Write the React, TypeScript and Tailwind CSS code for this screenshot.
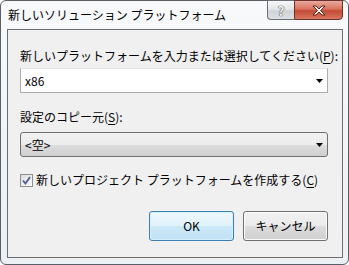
import React from 'react';

const jp = { fontFamily: '"Meiryo UI", "Noto Sans CJK JP", "Noto Sans", sans-serif' };

const Arrow = () => (
  <svg width="7" height="4" viewBox="0 0 7 4" className="shrink-0">
    <path d="M0 0h7L3.5 4z" fill="#000" />
  </svg>
);

const Mnemonic = ({ children }: { children: React.ReactNode }) => (
  <span className="underline underline-offset-2">{children}</span>
);

const CaptionButtons = () => (
  <div className="flex -mt-px mr-[5px]">
    <div className="w-[27px] h-[20px] rounded-bl-[4px] border border-r-0 border-[#6b6f75] bg-[linear-gradient(to_bottom,#f6f7f8_0%,#e4e6e9_45%,#cfd3d8_55%,#dde1e5_100%)] flex items-center justify-center">
      <span
        className="text-[13px] leading-none text-[#f4f4f4] font-bold [text-shadow:0_0_1px_#333,0_0_1px_#333]"
        style={jp}
      >
        ?
      </span>
    </div>
    <div className="w-[49px] h-[20px] rounded-br-[4px] border border-[#6b3228] bg-[linear-gradient(to_bottom,#e9ab9f_0%,#d9715d_45%,#c44a35_55%,#d7785f_100%)] flex items-center justify-center">
      <svg width="14" height="11" viewBox="0 0 14 11">
        <path
          d="M1 1h3l3 3 3-3h3l-4.5 4.5L13 10h-3L7 7l-3 3H1l4.5-4.5z"
          fill="#fff"
          stroke="#5a2219"
          strokeWidth="1"
          strokeLinejoin="round"
        />
      </svg>
    </div>
  </div>
);

export default function App() {
  return (
    <div className="w-[349px] h-[265px] bg-white">
      <div className="w-full h-full flex flex-col rounded-[6px] border border-[#5a5f66] bg-gradient-to-b from-[#f8f9fb] to-[#eceff3]">
        {/* title bar */}
        <div className="h-[28px] flex items-start justify-between">
          <span className="pl-[7px] pt-[6px] text-[12px] leading-[16px] text-black" style={jp}>
            新しいソリューション プラットフォーム
          </span>
          <CaptionButtons />
        </div>

        {/* client area */}
        <div className="ml-[6px] mr-[5px] mb-[6px] flex-1 border border-[#6e6e6e] bg-[#f0f0f0] pl-[12px] pt-[18px] flex flex-col text-[12px] leading-[16px] text-black" style={jp}>
          <span className="whitespace-nowrap">
            新しいプラットフォームを入力または選択してください(<Mnemonic>P</Mnemonic>):
          </span>
          <div className="mt-[4px] w-[308px] h-[25px] border border-[#abadb3] border-t-[#e3e3e3] bg-white flex items-center justify-between pl-[4px] pr-[4px]">
            <span>x86</span>
            <Arrow />
          </div>

          <span className="mt-[16px]">
            設定のコピー元(<Mnemonic>S</Mnemonic>):
          </span>
          <div className="mt-[7px] w-[308px] h-[25px] rounded-[3px] border border-[#707070] bg-[linear-gradient(to_bottom,#f2f2f2_0%,#ebebeb_50%,#dddddd_51%,#cfcfcf_100%)] flex items-center justify-between pl-[4px] pr-[4px]">
            <span>&lt;空&gt;</span>
            <Arrow />
          </div>

          <label className="mt-[15px] flex items-center gap-[3px] whitespace-nowrap">
            <span className="w-[13px] h-[13px] border border-[#8f8f8f] bg-[linear-gradient(135deg,#dcdcdc,#fcfcfc)] p-px flex items-center justify-center">
              <svg width="9" height="9" viewBox="0 0 9 9">
                <path d="M1 4.5l2.5 3L8 1" fill="none" stroke="#4a5f97" strokeWidth="1.8" />
              </svg>
            </span>
            <span>
              新しいプロジェクト プラットフォームを作成する(<Mnemonic>C</Mnemonic>)
            </span>
          </label>

          <div className="mt-[23px] w-[308px] flex justify-end gap-[9px]">
            <button className="w-[85px] h-[30px] rounded-[3px] border border-[#3c7fb1] bg-[linear-gradient(to_bottom,#eef8fd_0%,#e0f2fc_50%,#cce9f8_51%,#bfe2f4_100%)] shadow-[inset_0_0_0_1px_#d6f0fc]">
              OK
            </button>
            <button className="w-[85px] h-[30px] rounded-[3px] border border-[#707070] bg-[linear-gradient(to_bottom,#f2f2f2_0%,#ebebeb_50%,#dddddd_51%,#cfcfcf_100%)] shadow-[inset_0_0_0_1px_#fcfcfc]">
              キャンセル
            </button>
          </div>
        </div>
      </div>
    </div>
  );
}
